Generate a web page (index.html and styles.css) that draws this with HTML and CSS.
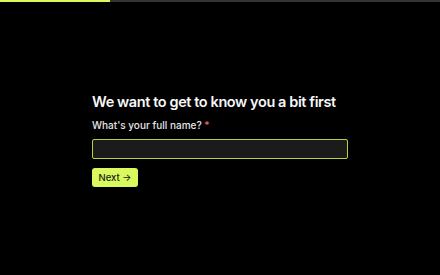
FILE: index.html
```html
<!DOCTYPE html>
<html lang="en">
  <head>
    <meta charset="UTF-8" />
    <meta name="viewport" content="width=device-width, initial-scale=1.0" />
    <title>Onboarding</title>
    <link rel="stylesheet" href="styles.css">
  </head>
  <body>
    <div class="progress">
      <div class="progress_fill"></div>
    </div>
    <div class="container">
      <form class="step">
        <h2 class="step_title">We want to get to know you a bit first</h2>
        <label class="step_label" for="full_name">
          What's your full name? <span class="required">*</span>
        </label>
        <input id="full_name" class="step_input" type="text" />
        <button type="button" class="next_button">Next &rarr;</button>
      </form>
    </div>
  </body>
</html>
```

FILE: styles.css
```css
html,
body {
  margin: 0;
  height: 100%;
  background-color: #000;
  font-family: Inter, "Noto Sans", sans-serif;
}

.progress {
  height: 2px;
  background-color: #333333;
}

.progress_fill {
  width: 25%;
  height: 100%;
  background-color: #d9f95d;
}

.container {
  height: calc(100% - 2px);
  display: flex;
  align-items: center;
  justify-content: center;
}

.step {
  width: 256px;
  display: flex;
  flex-direction: column;
  align-items: flex-start;
  margin-top: 3px;
}

.step_title {
  margin: 0 0 7px;
  color: #f7f7f7;
  font-size: 14.5px;
  font-weight: 600;
  letter-spacing: -0.4px;
  line-height: 18px;
  white-space: nowrap;
}

.step_label {
  color: #e6e6e6;
  font-size: 10px;
  font-weight: 500;
  line-height: 14px;
  margin-bottom: 7px;
}

.required {
  color: #f26d6d;
}

.step_input {
  width: 100%;
  height: 20px;
  box-sizing: border-box;
  background-color: #1b1b1b;
  border: 1px solid #b4d13f;
  border-radius: 2px;
  color: #eee;
  outline: none;
  margin: 0 0 9px;
}

.next_button {
  width: 46px;
  height: 19px;
  padding: 0;
  background-color: #d9f95d;
  border: none;
  border-radius: 3px;
  color: #1a1a1a;
  font-family: inherit;
  font-size: 9.5px;
  font-weight: 500;
  cursor: pointer;
}
```
